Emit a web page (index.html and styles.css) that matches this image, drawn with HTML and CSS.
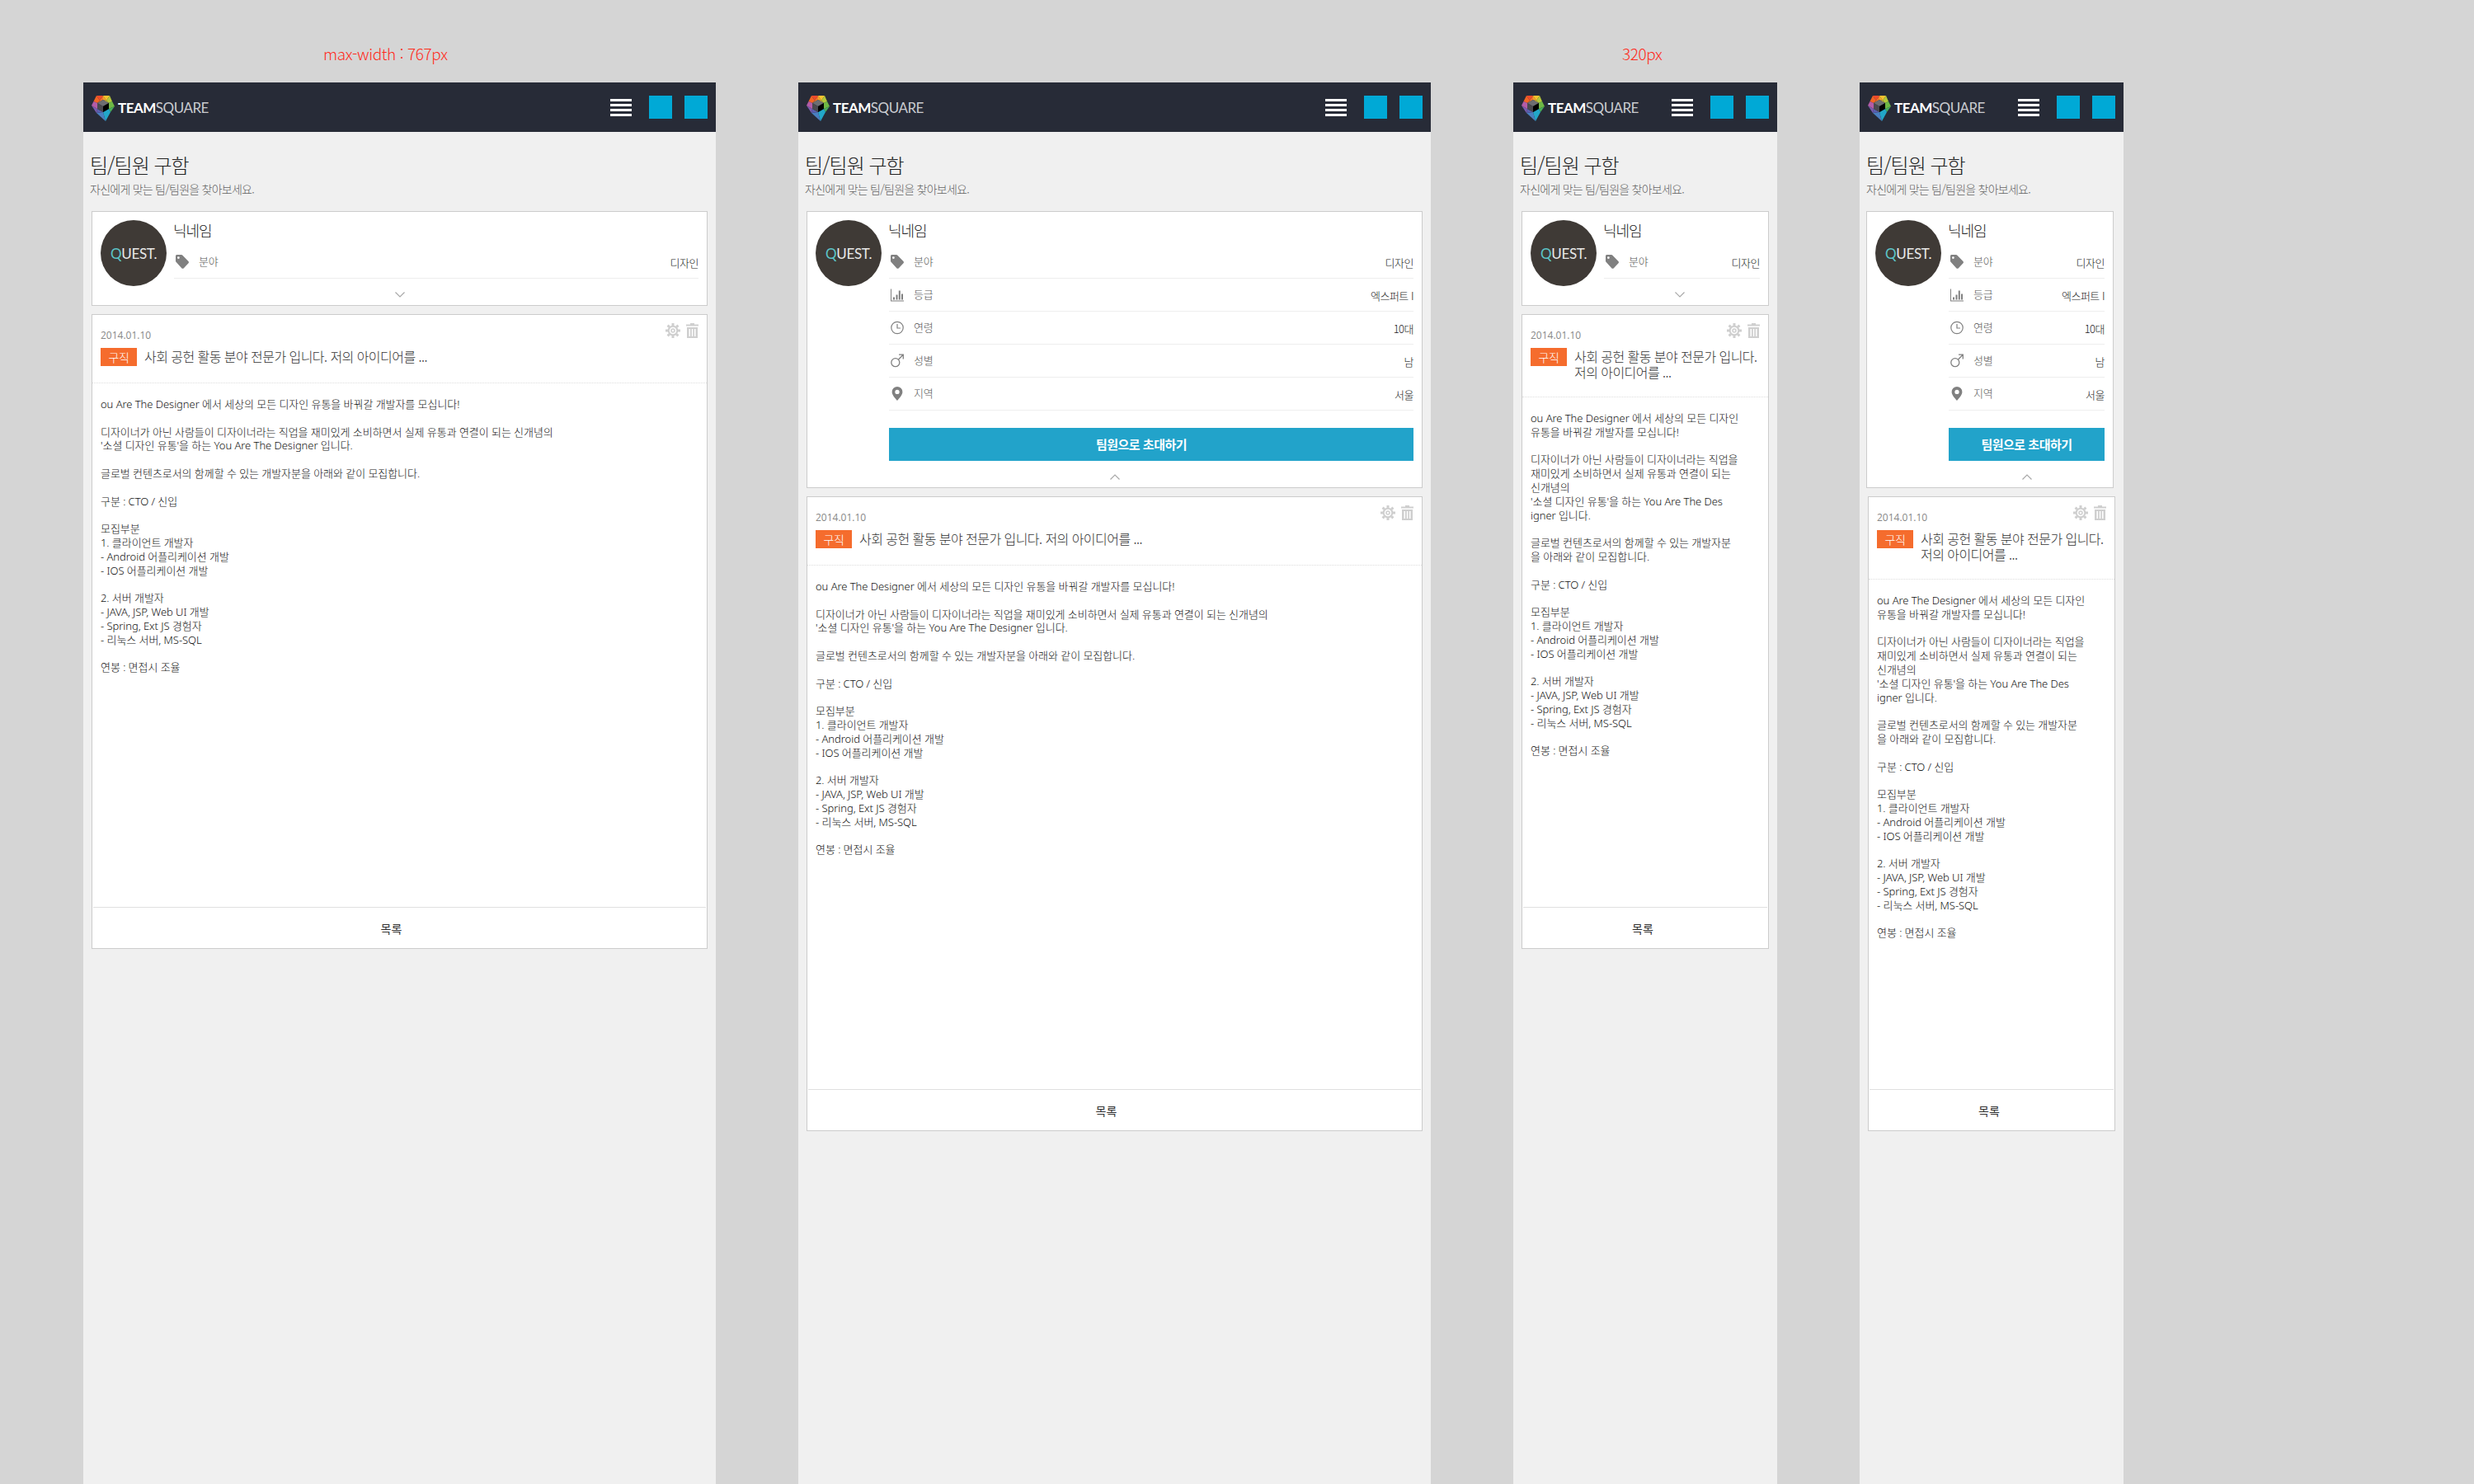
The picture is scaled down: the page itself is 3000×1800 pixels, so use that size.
FILE: index.html
```html
<!DOCTYPE html>
<html lang="ko">
<head>
  <meta charset="UTF-8">
  <title>팀/팀원 구함</title>
  <link rel="stylesheet" href="styles.css">
</head>
<body>
  <svg class="sprite" xmlns="http://www.w3.org/2000/svg">
    <symbol id="i-logo" viewBox="0 0 28 31">
      <polygon fill="#ef4a2c" points="6,0 14,0 10,6"/>
      <polygon fill="#f36424" points="6,0 10,6 7,9 2.500,7"/>
      <polygon fill="#f2762a" points="14,0 14,5 7,9 10,6"/>
      <polygon fill="#f8a326" points="14,0 18,6 14,5"/>
      <polygon fill="#f8c22f" points="14,0 22,0 18,6"/>
      <polygon fill="#e9c934" points="14,5 18,6 21,9"/>
      <polygon fill="#b3c83a" points="22,0 25,7 21,9 18,6"/>
      <polygon fill="#6fb845" points="25,7 28,13 21,16 21,9"/>
      <polygon fill="#49ad5a" points="28,13 23,20 21,16"/>
      <polygon fill="#22a7c8" points="23,20 17,31 14,20 21,16"/>
      <polygon fill="#4a7fc0" points="14,20 17,31 6,21"/>
      <polygon fill="#5a5fb0" points="6,21 14,20 7,16"/>
      <polygon fill="#7b5db0" points="0,12 6,21 7,16"/>
      <polygon fill="#b45ca6" points="0,12 7,16 7,9 2.500,7"/>
      <polygon fill="#6d6e72" points="14,5 21,9 14,13 7,9"/>
      <polygon fill="#4a4a4f" points="7,9 14,13 14,20 7,16"/>
      <polygon fill="#000" points="21,9 14,13 14,20 21,16"/>
    </symbol>
    <symbol id="i-tag" viewBox="0 0 16 17">
      <path fill="#808080" d="M0 1.500C0 .7.700 0 1.500 0H7c.5 0 .9.200 1.200.5l7.300 7.600c.6.600.6 1.500 0 2.100l-5.900 6.200c-.6.600-1.500.6-2.100 0L.5 8.700C.2 8.400 0 8 0 7.500zM3.400 2.200a1.400 1.400 0 1 0 0 2.800 1.400 1.400 0 0 0 0-2.800z"/>
    </symbol>
    <symbol id="i-chart" viewBox="0 0 16 16">
      <path fill="#808080" d="M0 1h1v14h15v1H0zM3 11h2v3H3zM6.500 8h2v6h-2zM9.800 3h2v11h-2zM13 7h2v7h-2z"/>
    </symbol>
    <symbol id="i-clock" viewBox="0 0 16 16">
      <circle cx="8" cy="8" r="7.200" fill="none" stroke="#808080" stroke-width="1.200"/>
      <path fill="none" stroke="#808080" stroke-width="1.200" d="M8 3.500V8.500H12"/>
    </symbol>
    <symbol id="i-male" viewBox="0 0 16 16">
      <circle cx="5.800" cy="10.200" r="5" fill="none" stroke="#808080" stroke-width="1.300"/>
      <path fill="none" stroke="#808080" stroke-width="1.300" d="M9.500 6.500L15.200.8M10 .7H15.300V6"/>
    </symbol>
    <symbol id="i-pin" viewBox="0 0 12 16">
      <path fill="#808080" fill-rule="evenodd" d="M6 0a6 6 0 0 1 6 6c0 3.500-4 7.500-6 10C4 13.500 0 9.500 0 6a6 6 0 0 1 6-6zm0 3.500a2.500 2.500 0 1 0 0 5 2.500 2.500 0 0 0 0-5z"/>
    </symbol>
    <symbol id="i-gear" viewBox="0 0 18 18">
      <circle cx="9" cy="9" r="5.300" fill="none" stroke="#cfcfcf" stroke-width="2"/>
      <circle cx="9" cy="9" r="2" fill="none" stroke="#cfcfcf" stroke-width="1.500"/>
      <path fill="none" stroke="#cfcfcf" stroke-width="3" d="M9 0v3M9 15v3M0 9h3M15 9h3M2.600 2.600l2.200 2.200M13.200 13.200l2.200 2.200M15.400 2.600l-2.200 2.200M4.800 13.200l-2.200 2.200"/>
    </symbol>
    <symbol id="i-trash" viewBox="0 0 15 18">
      <path fill="#cfcfcf" fill-rule="evenodd" d="M5 0h5v1.500h5V3.500H0V1.500h5zM1 5h13v13H1zM3.500 7v9h1.500V7zM6.800 7v9h1.500V7zM10 7v9h1.500V7z"/>
    </symbol>
    <symbol id="i-down" viewBox="0 0 12 7">
      <path fill="none" stroke="#a8a8a8" stroke-width="1.200" d="M.5.500L6 6l5.500-5.500"/>
    </symbol>
    <symbol id="i-up" viewBox="0 0 12 7">
      <path fill="none" stroke="#a8a8a8" stroke-width="1.200" d="M.5 6.500L6 1l5.500 5.500"/>
    </symbol>
  </svg>

  <div class="board">

    <!-- max-width : 767px, 접힘 -->
    <div class="column">
      <div class="label label-wide">max-width : 767px</div>
      <div class="frame frame-wide">
        <div class="topbar">
          <div class="brand"><svg class="logo"><use href="#i-logo"/></svg><span class="brand-name"><b>TEAM</b>SQUARE</span></div>
          <div class="hamburger"><span></span><span></span><span></span><span></span></div>
          <div class="square"></div>
          <div class="square"></div>
        </div>
        <div class="page">
          <h1 class="page-title">팀/팀원 구함</h1>
          <p class="page-desc">자신에게 맞는 팀/팀원을 찾아보세요.</p>
          <div class="card profile">
            <div class="profile-main">
              <div class="avatar"><span><i>Q</i>UEST.</span></div>
              <div class="profile-info">
                <div class="nick">닉네임</div>
                <div class="row"><svg class="row-icon"><use href="#i-tag"/></svg><span class="row-key">분야</span><span class="row-val">디자인</span></div>
              </div>
            </div>
            <div class="toggle"><svg class="chev"><use href="#i-down"/></svg></div>
          </div>
          <div class="card post">
            <div class="post-top"><span class="post-date">2014.01.10</span><svg class="tool-gear"><use href="#i-gear"/></svg><svg class="tool-trash"><use href="#i-trash"/></svg></div>
            <div class="post-head"><span class="badge">구직</span><span class="post-title">사회 공헌 활동 분야 전문가 입니다. 저의 아이디어를 ...</span></div>
            <div class="post-body">ou Are The Designer 에서 세상의 모든 디자인 유통을 바꿔갈 개발자를 모십니다!

디자이너가 아닌 사람들이 디자이너라는 직업을 재미있게 소비하면서 실제 유통과 연결이 되는 신개념의
'소셜 디자인 유통'을 하는 You Are The Designer 입니다.

글로벌 컨텐츠로서의 함께할 수 있는 개발자분을 아래와 같이 모집합니다.

구분 : CTO / 신입

모집부분
1. 클라이언트 개발자
- Android 어플리케이션 개발
- IOS 어플리케이션 개발

2. 서버 개발자
- JAVA, JSP, Web UI 개발
- Spring, Ext JS 경험자
- 리눅스 서버, MS-SQL

연봉 : 면접시 조율</div>
            <div class="post-foot">목록</div>
          </div>
        </div>
      </div>
    </div>

    <!-- max-width : 767px, 펼침 -->
    <div class="column">
      <div class="label"></div>
      <div class="frame frame-wide">
        <div class="topbar">
          <div class="brand"><svg class="logo"><use href="#i-logo"/></svg><span class="brand-name"><b>TEAM</b>SQUARE</span></div>
          <div class="hamburger"><span></span><span></span><span></span><span></span></div>
          <div class="square"></div>
          <div class="square"></div>
        </div>
        <div class="page">
          <h1 class="page-title">팀/팀원 구함</h1>
          <p class="page-desc">자신에게 맞는 팀/팀원을 찾아보세요.</p>
          <div class="card profile">
            <div class="profile-main">
              <div class="avatar"><span><i>Q</i>UEST.</span></div>
              <div class="profile-info">
                <div class="nick">닉네임</div>
                <div class="row"><svg class="row-icon"><use href="#i-tag"/></svg><span class="row-key">분야</span><span class="row-val">디자인</span></div>
                <div class="row"><svg class="row-icon"><use href="#i-chart"/></svg><span class="row-key">등급</span><span class="row-val">엑스퍼트 I</span></div>
                <div class="row"><svg class="row-icon"><use href="#i-clock"/></svg><span class="row-key">연령</span><span class="row-val">10대</span></div>
                <div class="row"><svg class="row-icon"><use href="#i-male"/></svg><span class="row-key">성별</span><span class="row-val">남</span></div>
                <div class="row"><svg class="row-icon"><use href="#i-pin"/></svg><span class="row-key">지역</span><span class="row-val">서울</span></div>
                <div class="invite">팀원으로 초대하기</div>
              </div>
            </div>
            <div class="toggle"><svg class="chev"><use href="#i-up"/></svg></div>
          </div>
          <div class="card post">
            <div class="post-top"><span class="post-date">2014.01.10</span><svg class="tool-gear"><use href="#i-gear"/></svg><svg class="tool-trash"><use href="#i-trash"/></svg></div>
            <div class="post-head"><span class="badge">구직</span><span class="post-title">사회 공헌 활동 분야 전문가 입니다. 저의 아이디어를 ...</span></div>
            <div class="post-body">ou Are The Designer 에서 세상의 모든 디자인 유통을 바꿔갈 개발자를 모십니다!

디자이너가 아닌 사람들이 디자이너라는 직업을 재미있게 소비하면서 실제 유통과 연결이 되는 신개념의
'소셜 디자인 유통'을 하는 You Are The Designer 입니다.

글로벌 컨텐츠로서의 함께할 수 있는 개발자분을 아래와 같이 모집합니다.

구분 : CTO / 신입

모집부분
1. 클라이언트 개발자
- Android 어플리케이션 개발
- IOS 어플리케이션 개발

2. 서버 개발자
- JAVA, JSP, Web UI 개발
- Spring, Ext JS 경험자
- 리눅스 서버, MS-SQL

연봉 : 면접시 조율</div>
            <div class="post-foot">목록</div>
          </div>
        </div>
      </div>
    </div>

    <!-- 320px, 접힘 -->
    <div class="column">
      <div class="label label-narrow">320px</div>
      <div class="frame frame-narrow">
        <div class="topbar">
          <div class="brand"><svg class="logo"><use href="#i-logo"/></svg><span class="brand-name"><b>TEAM</b>SQUARE</span></div>
          <div class="hamburger"><span></span><span></span><span></span><span></span></div>
          <div class="square"></div>
          <div class="square"></div>
        </div>
        <div class="page">
          <h1 class="page-title">팀/팀원 구함</h1>
          <p class="page-desc">자신에게 맞는 팀/팀원을 찾아보세요.</p>
          <div class="card profile">
            <div class="profile-main">
              <div class="avatar"><span><i>Q</i>UEST.</span></div>
              <div class="profile-info">
                <div class="nick">닉네임</div>
                <div class="row"><svg class="row-icon"><use href="#i-tag"/></svg><span class="row-key">분야</span><span class="row-val">디자인</span></div>
              </div>
            </div>
            <div class="toggle"><svg class="chev"><use href="#i-down"/></svg></div>
          </div>
          <div class="card post">
            <div class="post-top"><span class="post-date">2014.01.10</span><svg class="tool-gear"><use href="#i-gear"/></svg><svg class="tool-trash"><use href="#i-trash"/></svg></div>
            <div class="post-head"><span class="badge">구직</span><span class="post-title">사회 공헌 활동 분야 전문가 입니다. 저의 아이디어를 ...</span></div>
            <div class="post-body">ou Are The Designer 에서 세상의 모든 디자인
유통을 바꿔갈 개발자를 모십니다!

디자이너가 아닌 사람들이 디자이너라는 직업을
재미있게 소비하면서 실제 유통과 연결이 되는
신개념의
'소셜 디자인 유통'을 하는 You Are The Des
igner 입니다.

글로벌 컨텐츠로서의 함께할 수 있는 개발자분
을 아래와 같이 모집합니다.

구분 : CTO / 신입

모집부분
1. 클라이언트 개발자
- Android 어플리케이션 개발
- IOS 어플리케이션 개발

2. 서버 개발자
- JAVA, JSP, Web UI 개발
- Spring, Ext JS 경험자
- 리눅스 서버, MS-SQL

연봉 : 면접시 조율</div>
            <div class="post-foot">목록</div>
          </div>
        </div>
      </div>
    </div>

    <!-- 320px, 펼침 -->
    <div class="column">
      <div class="label"></div>
      <div class="frame frame-narrow frame-open">
        <div class="topbar">
          <div class="brand"><svg class="logo"><use href="#i-logo"/></svg><span class="brand-name"><b>TEAM</b>SQUARE</span></div>
          <div class="hamburger"><span></span><span></span><span></span><span></span></div>
          <div class="square"></div>
          <div class="square"></div>
        </div>
        <div class="page">
          <h1 class="page-title">팀/팀원 구함</h1>
          <p class="page-desc">자신에게 맞는 팀/팀원을 찾아보세요.</p>
          <div class="card profile">
            <div class="profile-main">
              <div class="avatar"><span><i>Q</i>UEST.</span></div>
              <div class="profile-info">
                <div class="nick">닉네임</div>
                <div class="row"><svg class="row-icon"><use href="#i-tag"/></svg><span class="row-key">분야</span><span class="row-val">디자인</span></div>
                <div class="row"><svg class="row-icon"><use href="#i-chart"/></svg><span class="row-key">등급</span><span class="row-val">엑스퍼트 I</span></div>
                <div class="row"><svg class="row-icon"><use href="#i-clock"/></svg><span class="row-key">연령</span><span class="row-val">10대</span></div>
                <div class="row"><svg class="row-icon"><use href="#i-male"/></svg><span class="row-key">성별</span><span class="row-val">남</span></div>
                <div class="row"><svg class="row-icon"><use href="#i-pin"/></svg><span class="row-key">지역</span><span class="row-val">서울</span></div>
                <div class="invite">팀원으로 초대하기</div>
              </div>
            </div>
            <div class="toggle"><svg class="chev"><use href="#i-up"/></svg></div>
          </div>
          <div class="card post">
            <div class="post-top"><span class="post-date">2014.01.10</span><svg class="tool-gear"><use href="#i-gear"/></svg><svg class="tool-trash"><use href="#i-trash"/></svg></div>
            <div class="post-head"><span class="badge">구직</span><span class="post-title">사회 공헌 활동 분야 전문가 입니다. 저의 아이디어를 ...</span></div>
            <div class="post-body">ou Are The Designer 에서 세상의 모든 디자인
유통을 바꿔갈 개발자를 모십니다!

디자이너가 아닌 사람들이 디자이너라는 직업을
재미있게 소비하면서 실제 유통과 연결이 되는
신개념의
'소셜 디자인 유통'을 하는 You Are The Des
igner 입니다.

글로벌 컨텐츠로서의 함께할 수 있는 개발자분
을 아래와 같이 모집합니다.

구분 : CTO / 신입

모집부분
1. 클라이언트 개발자
- Android 어플리케이션 개발
- IOS 어플리케이션 개발

2. 서버 개발자
- JAVA, JSP, Web UI 개발
- Spring, Ext JS 경험자
- 리눅스 서버, MS-SQL

연봉 : 면접시 조율</div>
            <div class="post-foot">목록</div>
          </div>
        </div>
      </div>
    </div>

  </div>
</body>
</html>
```
FILE: styles.css
```css
* { margin: 0; padding: 0; box-sizing: border-box; }
body {
  font-family: "Noto Sans CJK KR", "Noto Sans", sans-serif;
  font-weight: 300;
  background-color: #d5d5d5;
  height: 1800px;
  overflow: hidden;
}
.sprite { display: none; }
.board {
  display: flex;
  gap: 100px;
  padding-left: 101px;
}
.label {
  height: 100px;
  padding-top: 54px;
  font-size: 19px;
  line-height: 22px;
  letter-spacing: -0.4px;
  color: #ff2a1a;
}
.label-wide { padding-left: 291px; }
.label-narrow { padding-left: 132px; }
.frame {
  height: 1700px;
  background-color: #f0f0f0;
}
.frame-wide { width: 767px; }
.frame-narrow { width: 320px; }

/* 상단바 */
.topbar {
  display: flex;
  align-items: center;
  height: 60px;
  padding: 0 10px;
  background-color: #272b37;
}
.brand {
  display: flex;
  align-items: center;
  flex: 1;
}
.logo { width: 28px; height: 31px; margin-top: 2px; }
.brand-name {
  margin-left: 4px;
  font-family: "Lato", sans-serif;
  font-weight: 400;
  font-size: 17px;
  letter-spacing: -0.5px;
  color: #c9cbd0;
}
.brand-name b { font-weight: 700; color: #fff; }
.hamburger {
  display: flex;
  flex-direction: column;
  gap: 3px;
  width: 26px;
  margin-right: 21px;
}
.hamburger span { height: 3px; background-color: #fff; }
.square {
  width: 28px;
  height: 28px;
  background-color: #00a9d6;
}
.square:last-child { margin-left: 15px; }

/* 본문 */
.page { padding: 26px 10px 0; }
.page-title {
  margin-left: -2px;
  font-size: 24px;
  font-weight: 300;
  line-height: 28px;
  letter-spacing: -1px;
  color: #222;
}
.page-desc {
  margin: 5px 0 17px -2px;
  font-size: 14px;
  line-height: 20px;
  letter-spacing: -0.75px;
  color: #666;
}
.card {
  background-color: #fff;
  border: 1px solid #ccc;
}
.profile { padding: 10px 10px 0; }
.profile-main { display: flex; align-items: flex-start; }
.avatar {
  flex: none;
  display: flex;
  align-items: center;
  justify-content: center;
  width: 80px;
  height: 80px;
  margin: 0 9px -9px 0;
  border-radius: 50%;
  background-color: #3f3a36;
  font-family: "Lato", sans-serif;
  font-weight: 400;
  font-size: 17px;
  letter-spacing: -0.3px;
  color: #e8e8e8;
}
.avatar i { font-style: normal; color: #5cc4c8; }
.profile-info { flex: 1; }
.nick {
  height: 31px;
  margin-left: -1px;
  font-size: 18px;
  line-height: 24px;
  letter-spacing: -1px;
  color: #222;
}
.row {
  display: flex;
  align-items: center;
  height: 40px;
  border-bottom: 1px solid #eee;
  font-size: 13px;
}
.row-icon { width: 16px; height: 17px; margin: 0 12px 0 2px; }
.row-key { flex: 1; padding-bottom: 2px; letter-spacing: -0.3px; color: #555; }
.row-val { padding-top: 1px; letter-spacing: -0.5px; color: #222; }
.invite {
  height: 40px;
  margin-top: 21px;
  background-color: #22a3ca;
  font-size: 15px;
  font-weight: 700;
  line-height: 40px;
  letter-spacing: -0.5px;
  text-align: center;
  color: #fff;
}
.frame-wide .invite { padding-right: 24px; }
.toggle {
  height: 32px;
  padding-top: 16px;
  text-align: center;
}
.chev { display: block; width: 12px; height: 7px; margin: 0 auto; }
.frame-narrow .toggle { padding-left: 84px; }
.frame-open .toggle { padding-left: 90px; }
.frame-open .profile { margin-left: -2px; margin-right: 2px; }

/* 글 */
.post {
  display: flex;
  flex-direction: column;
  height: 770px;
  margin-top: 10px;
}
.post-top {
  display: flex;
  padding: 10px 10px 0;
  height: 40px;
}
.post-date {
  flex: 1;
  padding-top: 7px;
  font-family: "Open Sans", sans-serif;
  font-weight: 400;
  font-size: 12px;
  line-height: 16px;
  color: #888;
}
.tool-gear { width: 18px; height: 18px; margin-right: 7px; }
.tool-trash { width: 15px; height: 18px; }
.post-head {
  display: flex;
  align-items: flex-start;
  padding: 0 10px 20px;
  border-bottom: 1px dotted #ddd;
}
.badge {
  flex: none;
  width: 44px;
  height: 22px;
  margin-right: 9px;
  background-color: #f56c2d;
  font-size: 14px;
  line-height: 22px;
  letter-spacing: -0.4px;
  text-align: center;
  color: #fff;
}
.post-title {
  padding-top: 1px;
  font-size: 16px;
  line-height: 19px;
  letter-spacing: -0.55px;
  color: #333;
}
.post-body {
  flex: 1;
  padding: 17px 10px 0;
  font-family: "Noto Sans", "Noto Sans CJK KR", sans-serif;
  font-weight: 300;
  font-size: 13px;
  line-height: 16.800px;
  letter-spacing: -0.05px;
  white-space: pre;
  color: #111;
}
.post-foot {
  height: 50px;
  margin: 0 1px;
  border-top: 1px solid #e0e0e0;
  font-size: 14px;
  font-weight: 400;
  line-height: 50px;
  text-align: center;
  color: #333;
}
.frame-wide .post-foot { padding-right: 20px; }
.frame-narrow .post-foot { padding-right: 6px; }
```
